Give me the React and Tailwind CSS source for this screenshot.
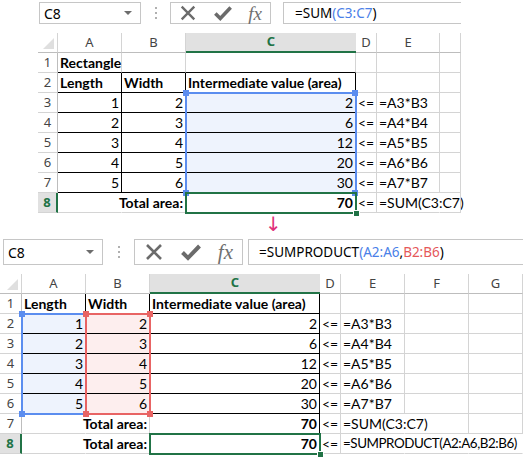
import React from "react";

const RB = { grid: "border-r-[#d4d4d4]", black: "border-r-black", none: "border-r-transparent" };
const BB = { grid: "border-b-[#d4d4d4]", black: "border-b-black", none: "border-b-transparent" };

const BLUE = "text-[#4a80e8]";
const RED = "text-[#e5585a]";

function Cell({ w, c = {} }) {
  const { t, bold, right, tight, br = "grid", bb = "grid", fill = "" } = c;
  return (
    <div
      className={`${w} h-full shrink-0 border-r border-b ${RB[br]} ${BB[bb]} ${fill} flex items-center pt-[1px] whitespace-nowrap leading-none text-black ${
        right ? "justify-end pr-[2px]" : "justify-start pl-[2px]"
      } ${bold ? "font-bold" : ""} ${tight ? "text-[13.4px] tracking-[-0.45px]" : "text-[14px]"}`}
    >
      {t}
    </div>
  );
}

function Corner({ w }) {
  return (
    <div className={`${w} h-full shrink-0 border-r border-b border-r-[#d4d4d4] border-b-[#bdbdbd] flex items-end justify-end p-[3px]`}>
      <svg width="11" height="11" viewBox="0 0 11 11">
        <polygon points="11,0 11,11 0,11" fill="#dfdfdf" />
      </svg>
    </div>
  );
}

function HeaderRow({ cols, labels, sel }) {
  return (
    <div className="flex h-[20px]">
      <Corner w={cols[0]} />
      {labels.map((l, i) =>
        l === sel ? (
          <div
            key={i}
            className={`${cols[i + 1]} h-full shrink-0 bg-[#e1e1e1] border-b-2 border-b-[#217346] flex items-center justify-center text-[13px] font-bold text-[#217346]`}
          >
            {l}
          </div>
        ) : (
          <div
            key={i}
            className={`${cols[i + 1]} h-full shrink-0 border-r border-b border-r-[#d4d4d4] border-b-[#bdbdbd] flex items-center justify-center text-[13px] text-[#444]`}
          >
            {l}
          </div>
        )
      )}
    </div>
  );
}

function RowHead({ w, n, sel }) {
  return sel ? (
    <div className={`${w} h-full shrink-0 bg-[#e1e1e1] border-r-2 border-r-[#217346] border-b border-b-[#d4d4d4] flex items-center justify-center font-['Noto_Sans',sans-serif] text-[13px] font-bold text-[#217346]`}>
      {n}
    </div>
  ) : (
    <div className={`${w} h-full shrink-0 border-r border-b border-r-[#bdbdbd] border-b-[#d4d4d4] flex items-center justify-center font-['Noto_Sans',sans-serif] text-[13px] text-[#444]`}>
      {n}
    </div>
  );
}

function Sheet({ cols, labels, rows, overlays }) {
  return (
    <div className="relative font-['Lato',sans-serif]">
      <div className="font-['Noto_Sans',sans-serif]">
        <HeaderRow cols={cols} labels={labels} sel="C" />
      </div>
      {rows.map((r, i) => (
        <div key={i} className="flex h-[20px]">
          <RowHead w={cols[0]} n={i + 1} sel={i === 7} />
          {cols.slice(1).map((w, j) => (
            <Cell key={j} w={w} c={r[j]} />
          ))}
        </div>
      ))}
      {overlays}
    </div>
  );
}

function Handle({ cls }) {
  return <div className={`absolute w-[6px] h-[6px] ${cls}`} />;
}

function XIcon({ s }) {
  return (
    <svg width={s} height={s} viewBox="0 0 20 20">
      <path d="M3 3 L17 17 M17 3 L3 17" stroke="#6b6b6b" strokeWidth="2.6" />
    </svg>
  );
}

function CheckIcon({ s }) {
  return (
    <svg width={s} height={s} viewBox="0 0 20 20">
      <path d="M1.5 10.5 L7 16 L18.5 4" stroke="#6b6b6b" strokeWidth="4" fill="none" />
    </svg>
  );
}

function Toolbar({ big, formula }) {
  return (
    <div className={`flex items-stretch font-['Noto_Sans',sans-serif] ${big ? "h-[26px] ml-[3px]" : "h-[22px] ml-[39px] w-[422px]"}`}>
      <div className={`${big ? "w-[100px]" : "w-[102px]"} shrink-0 border border-[#c6c6c6] flex items-center justify-between pl-[4px] pr-[8px] text-[14px] text-black`}>
        <span>C8</span>
        <svg width="8" height="4" viewBox="0 0 8 4">
          <polygon points="0,0 8,0 4,4" fill="#6d6d6d" />
        </svg>
      </div>
      <div className={`${big ? "w-[31px]" : "w-[29px]"} shrink-0 flex flex-col items-center justify-center gap-[3px]`}>
        <div className="w-[2px] h-[2px] bg-[#b0b0b0]" />
        <div className="w-[2px] h-[2px] bg-[#b0b0b0]" />
        <div className="w-[2px] h-[2px] bg-[#b0b0b0]" />
      </div>
      <div className={`${big ? "w-[109px] px-[9px]" : "w-[101px] px-[8px]"} shrink-0 border border-[#c6c6c6] flex items-center justify-between`}>
        <XIcon s={big ? 20 : 18} />
        <CheckIcon s={big ? 20 : 18} />
        <span className={`font-['Liberation_Serif',serif] italic text-[#707070] ${big ? "text-[21px]" : "text-[19px]"} leading-none`}>fx</span>
      </div>
      <div className={`${big ? "ml-[5px] pl-[10px]" : "ml-[12px] pl-[11px]"} flex-1 border-y border-l border-[#c6c6c6] flex items-center text-[13.5px] text-black whitespace-nowrap`}>
        {formula}
      </div>
    </div>
  );
}

const topCols = ["w-[20px]", "w-[64px]", "w-[64px]", "w-[170px]", "w-[21px]", "w-[63px]", "w-[21px]"];
const botCols = ["w-[22px]", "w-[64px]", "w-[64px]", "w-[170px]", "w-[21px]", "w-[64px]", "w-[64px]", "w-[54px]"];

const box = { br: "black", bb: "black" };

const topRows = [
  [{ t: "Rectangle", bold: true, bb: "black" }, { bb: "black" }, { bb: "black" }],
  [
    { t: "Length", bold: true, ...box },
    { t: "Width", bold: true, ...box },
    { t: "Intermediate value (area)", bold: true, ...box },
  ],
  ...[1, 2, 3, 4, 5].map((n) => [
    { t: n, right: true, ...box },
    { t: n + 1, right: true, ...box },
    { t: n * (n + 1), right: true, ...box, fill: "bg-[#eef3fd]" },
    { t: "<=" },
    { t: `=A${n + 2}*B${n + 2}` },
  ]),
  [
    { br: "none" },
    { t: "Total area:", bold: true, right: true },
    { t: 70, bold: true, right: true },
    { t: "<=" },
    { t: "=SUM(C3:C7)", br: "none" },
  ],
];

const botRows = [
  [
    { t: "Length", bold: true, ...box },
    { t: "Width", bold: true, ...box },
    { t: "Intermediate value (area)", bold: true, ...box },
  ],
  ...[1, 2, 3, 4, 5].map((n) => [
    { t: n, right: true, ...box, fill: "bg-[#eef3fd]" },
    { t: n + 1, right: true, ...box, fill: "bg-[#fdeeee]" },
    { t: n * (n + 1), right: true, ...box },
    { t: "<=" },
    { t: `=A${n + 2}*B${n + 2}` },
  ]),
  [
    { br: "none" },
    { t: "Total area:", bold: true, right: true },
    { t: 70, bold: true, right: true, ...box },
    { t: "<=" },
    { t: "=SUM(C3:C7)", br: "none" },
  ],
  [
    { br: "none" },
    { t: "Total area:", bold: true, right: true },
    { t: 70, bold: true, right: true },
    { t: "<=" },
    { t: "=SUMPRODUCT(A2:A6,B2:B6)", br: "none", tight: true },
    { br: "none" },
    { br: "none" },
  ],
];

const topOverlays = (
  <>
    <div className="absolute left-[147px] top-[59px] w-[172px] h-[102px] border-2 border-[#5b8def]" />
    <div className="absolute left-[145px] top-[57px]"><Handle cls="bg-[#5b8def]" /></div>
    <div className="absolute left-[314px] top-[57px]"><Handle cls="bg-[#5b8def]" /></div>
    <div className="absolute left-[145px] top-[157px]"><Handle cls="bg-[#5b8def]" /></div>
    <div className="absolute left-[314px] top-[157px]"><Handle cls="bg-[#5b8def]" /></div>
    <div className="absolute left-[147px] top-[159px] w-[172px] h-[22px] border-2 border-[#217346]" />
    <div className="absolute left-[315px] top-[177px] w-[7px] h-[7px] bg-[#217346] border border-white" />
  </>
);

const botOverlays = (
  <>
    <div className="absolute left-[21px] top-[39px] w-[66px] h-[102px] border-2 border-[#5b8def]" />
    <div className="absolute left-[19px] top-[37px]"><Handle cls="bg-[#5b8def]" /></div>
    <div className="absolute left-[19px] top-[137px]"><Handle cls="bg-[#5b8def]" /></div>
    <div className="absolute left-[85px] top-[39px] w-[66px] h-[102px] border-2 border-[#e86464]" />
    <div className="absolute left-[83px] top-[37px]"><Handle cls="bg-[#e86464]" /></div>
    <div className="absolute left-[147px] top-[37px]"><Handle cls="bg-[#e86464]" /></div>
    <div className="absolute left-[83px] top-[137px]"><Handle cls="bg-[#e86464]" /></div>
    <div className="absolute left-[147px] top-[137px]"><Handle cls="bg-[#e86464]" /></div>
    <div className="absolute left-[149px] top-[159px] w-[172px] h-[22px] border-2 border-[#217346]" />
    <div className="absolute left-[317px] top-[177px] w-[7px] h-[7px] bg-[#217346] border border-white" />
  </>
);

export default function App() {
  return (
    <div className="w-[523px] h-[458px] bg-white overflow-hidden flex flex-col">
      <div className="mt-[2px]">
        <Toolbar
          formula={
            <>
              =SUM<span className={BLUE}>(C3:C7</span>)
            </>
          }
        />
      </div>
      <div className="mt-[9px] ml-[38px]">
        <Sheet cols={topCols} labels={["A", "B", "C", "D", "E", ""]} rows={topRows} overlays={topOverlays} />
      </div>
      <div className="h-[26px] shrink-0 pl-[265px] flex items-start">
        <span className="font-['DejaVu_Sans',sans-serif] text-[20px] leading-[22px] text-[#e0307a]">↓</span>
      </div>
      <Toolbar
        big
        formula={
          <>
            =SUMPRODUCT<span className={BLUE}>(A2:A6</span>,<span className={RED}>B2:B6</span>)
          </>
        }
      />
      <div className="mt-[9px]">
        <Sheet cols={botCols} labels={["A", "B", "C", "D", "E", "F", "G"]} rows={botRows} overlays={botOverlays} />
      </div>
    </div>
  );
}
